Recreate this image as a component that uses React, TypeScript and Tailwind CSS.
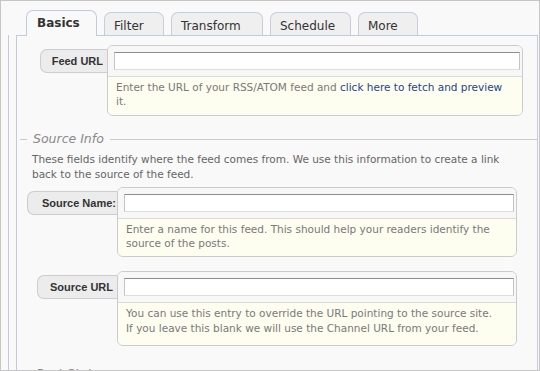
import React from 'react';

const font = { fontFamily: '"Liberation Sans", Arial, sans-serif' };
const ui = { fontFamily: '"DejaVu Sans", "Liberation Sans", sans-serif' };

const tabs = [
  { name: 'Basics', w: 'w-[71px]', active: true },
  { name: 'Filter', w: 'w-[60px]' },
  { name: 'Transform', w: 'w-[92px]' },
  { name: 'Schedule', w: 'w-[81px]' },
  { name: 'More', w: 'w-[60px]' },
];

interface FieldProps {
  label: string;
  rowClass: string;
  labelClass: string;
  boxClass: string;
  helpClass: string;
  children: React.ReactNode;
}

const Field: React.FC<FieldProps> = ({ label, rowClass, labelClass, boxClass, helpClass, children }) => (
  <div className={`flex items-start ${rowClass}`}>
    <div
      className={`mt-[4px] h-[24px] flex items-center justify-end rounded-l-[7px] border border-r-0 border-[#cdcdcd] bg-[#ececec] text-[11px] font-bold text-[#333] leading-none ${labelClass}`}
    >
      {label}
    </div>
    <div className={`rounded-[6px] border border-[#cbcbcb] overflow-hidden ${boxClass}`}>
      <div className="bg-[#f7f7f7] pt-[6px] pb-[6px] pl-[6px] pr-[2px] border-b border-[#dadada]">
        <div className="h-[18px] bg-white border border-[#c4c4c4] border-t-[#8c8c8c] border-b-[#dedede]" />
      </div>
      <div
        className={`bg-[#fdfdf0] pl-[8px] pr-[4px] pt-[3px] text-[10.5px] leading-[14px] text-[#7a7a7a] ${helpClass}`}
        style={ui}
      >
        {children}
      </div>
    </div>
  </div>
);

const Legend: React.FC<{ title: string; className?: string }> = ({ title, className = '' }) => (
  <div className={`flex items-center h-[16px] ml-[3px] ${className}`}>
    <div className="w-[7px] border-t border-[#cccccc]" />
    <span className="px-[6px] italic text-[12.5px] leading-[16px] text-[#8a8a8a]" style={ui}>
      {title}
    </span>
    <div className="flex-1 border-t border-[#cccccc]" />
  </div>
);

export default function App() {
  return (
    <div className="w-[540px] h-[371px] overflow-hidden border border-[#c6c6c6] bg-[#f9f9f9]" style={font}>
      {/* tab strip */}
      <div className="relative z-10 flex items-end gap-[6px] h-[35px] -mb-[1px] pl-[25px]" style={ui}>
        {tabs.map((t) =>
          t.active ? (
            <div
              key={t.name}
              className={`${t.w} h-[26px] rounded-t-[7px] border border-b-0 border-[#c2cbdb] bg-[#f9f9f9] pt-[5px] pl-[10px] text-[12px] leading-[15px] font-bold text-[#333]`}
            >
              {t.name}
            </div>
          ) : (
            <div
              key={t.name}
              className={`${t.w} h-[23px] mb-[1px] ml-px rounded-t-[7px] border border-b-0 border-[#c6cedc] bg-[#efefef] pt-[6px] pl-[9px] text-[12px] leading-[15px] text-[#333]`}
            >
              {t.name}
            </div>
          )
        )}
      </div>

      {/* outer rule + panel */}
      <div className="ml-[7px] h-[400px] border-l border-[#c2cbdb] pl-[7px] mr-[1px]">
        <div className="h-full border-t border-l border-r border-[#c2cbdb] bg-[#f9f9f9]">
          <Field
            label="Feed URL"
            rowClass="mt-[9px] ml-[23px]"
            labelClass="w-[67px] pr-[4px]"
            boxClass="w-[416px]"
            helpClass="pb-[7px]"
          >
            Enter the URL of your RSS/ATOM feed and{' '}
            <span className="text-[#24468c]">click here to fetch and preview</span>
            <br />
            it.
          </Field>

          <Legend title="Source Info" className="mt-[15px]" />
          <p className="mt-[5px] ml-[15px] text-[10.5px] leading-[15px] text-[#666]" style={ui}>
            These fields identify where the feed comes from. We use this information to create a link
            <br />
            back to the source of the feed.
          </p>

          <Field
            label="Source Name:"
            rowClass="mt-[5px] ml-[10px]"
            labelClass="w-[90px] pr-[1px]"
            boxClass="w-[400px]"
            helpClass="pb-[6px]"
          >
            Enter a name for this feed. This should help your readers identify the
            <br />
            source of the posts.
          </Field>

          <Field
            label="Source URL"
            rowClass="mt-[14px] ml-[20px]"
            labelClass="w-[80px] pr-[4px]"
            boxClass="w-[400px]"
            helpClass="pb-[9px] leading-[15px]"
          >
            You can use this entry to override the URL pointing to the source site.
            <br />
            If you leave this blank we will use the Channel URL from your feed.
          </Field>

          <div className="mt-[20px] ml-[19px] text-[12.5px] italic leading-[16px] text-[#8a8a8a]" style={ui}>
            Post Status
          </div>
        </div>
      </div>
    </div>
  );
}
